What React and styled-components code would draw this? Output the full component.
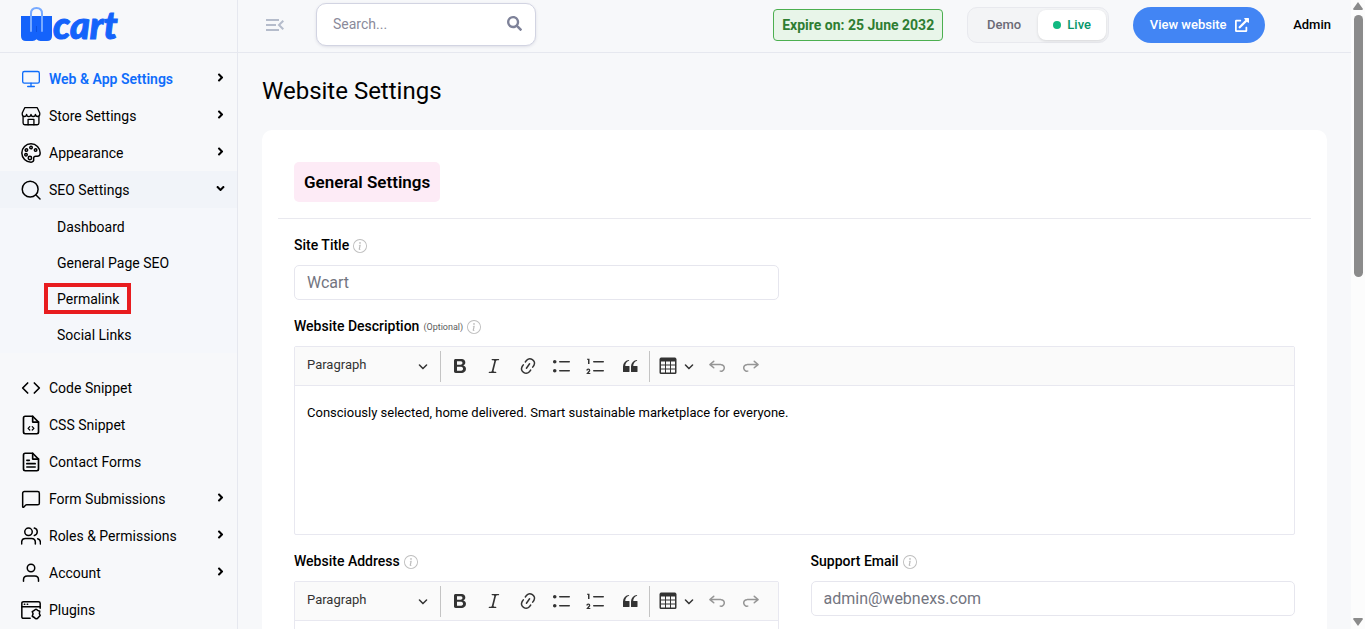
import React from 'react';
import styled, { createGlobalStyle, css } from 'styled-components';

// Icons
import { FaSearch, FaExternalLinkAlt, FaAngleRight, FaAngleDown } from 'react-icons/fa';
import { MdMenuOpen } from 'react-icons/md';
import { BsInfoCircle } from 'react-icons/bs';
import { Monitor, Code, MessageSquare } from 'lucide-react';


const GlobalStyle = createGlobalStyle`
  *, *::before, *::after {
    box-sizing: border-box;
  }

  body {
    margin: 0;
    background: #f7f8fa;
    color: #000;
    font-family: Roboto, "Liberation Sans", sans-serif;
    font-size: 14px;
    line-height: 20px;
  }

  button, input, select, textarea {
    font: inherit;
    color: inherit;
  }

  ul {
    list-style: none;
    margin: 0;
    padding: 0;
  }

  a {
    color: inherit;
    text-decoration: none;
  }
`;

const Shell = styled.div`
  display: flex;
  height: 100vh;
  overflow: hidden;
`;

const Page = styled.div`
  display: flex;
  flex: 1;
  flex-direction: column;
  min-width: 0;
`;

const Sidebar = styled.aside`
  flex: none;
  width: 238px;
  border-right: 1px solid #e6e8ef;
  overflow: hidden;
`;

const Brand = styled.a`
  display: flex;
  align-items: flex-start;
  height: 53px;
  padding: 7px 20px 0;
  border-bottom: 1px solid #e6e8ef;
`;

const BrandName = styled.span`
  color: #1463fb;
  font-family: Lato, "Open Sans", sans-serif;
  font-size: 38px;
  font-style: italic;
  font-weight: 900;
  line-height: 34px;
  -webkit-text-stroke: 1px #1463fb;
`;

const Nav = styled.nav`
  padding-top: 7px;
`;

const NavRow = styled.a`
  display: flex;
  align-items: center;
  gap: 8px;
  height: 37px;
  padding: 0 10px 0 21px;
  background: ${({ $open }) => ($open ? '#f1f4f9' : 'transparent')};
  color: ${({ $active }) => ($active ? '#0f6dfa' : '#000')};
  font-weight: ${({ $active }) => ($active ? 600 : 400)};

  > svg:first-child {
    flex: none;
    width: 20px;
    height: 20px;
  }

  > svg:last-child {
    flex: none;
    width: 13px;
    height: 13px;
    margin-bottom: 2px;
    color: #000;
  }
`;

const NavLabel = styled.span`
  flex: 1;
  white-space: nowrap;
`;

const SubNav = styled.ul`
  margin-bottom: 16px;
  padding: 0 0 1px 44px;
  background: #f5f7fb;
`;

const SubItem = styled.li`
  display: flex;
  align-items: center;
  height: 36px;
`;

const SubLink = styled.a`
  padding: 2px 8px 1px 9px;
  border: 4px solid ${({ $marked }) => ($marked ? '#e81c1f' : 'transparent')};
`;

const Header = styled.header`
  display: flex;
  flex: none;
  align-items: flex-start;
  height: 53px;
  padding: 3px 20px 0 25px;
  border-bottom: 1px solid #e6e8ef;
`;

const IconButton = styled.button`
  display: flex;
  padding: 0;
  border: 0;
  background: none;
  color: ${({ $color }) => $color || 'inherit'};
`;

const MenuToggle = styled(IconButton)`
  margin-top: 10px;
`;

const SearchBox = styled.form`
  display: flex;
  align-items: center;
  width: 220px;
  height: 43px;
  margin-left: 29px;
  padding: 0 13px 2px 16px;
  border: 1px solid #d2d4e2;
  border-radius: 10px;
  background: #fff;
  box-shadow: 0 1px 3px rgba(80, 80, 120, 0.15);
`;

const SearchInput = styled.input`
  flex: 1;
  min-width: 0;
  padding: 0;
  border: 0;
  outline: 0;
  background: none;

  &::placeholder {
    color: #8a8a9a;
    opacity: 1;
  }
`;

const HeaderActions = styled.div`
  display: flex;
  align-items: center;
  height: 43px;
  margin-left: auto;
`;

const ExpireBadge = styled.span`
  padding: 5px 8px;
  border: 1px solid #4caf50;
  border-radius: 4px;
  background: #e8f5e9;
  color: #2e7d32;
  font-weight: 700;
`;

const ModeSwitch = styled.div`
  display: flex;
  height: 36px;
  margin-left: 24px;
  padding: 2px;
  border: 1px solid #e8e9ee;
  border-radius: 10px;
  background: #f3f4f6;
`;

const ModeButton = styled.button`
  display: flex;
  align-items: center;
  justify-content: center;
  gap: 6px;
  width: 68px;
  padding: 0;
  border: 0;
  border-radius: 8px;
  background: none;
  color: #6b6b76;
  font-size: 13px;
  font-weight: 500;

  ${({ $live }) => $live && css`
    background: #fff;
    color: #059669;
    box-shadow: 0 1px 3px rgba(0, 0, 0, 0.12);

    &::before {
      content: '';
      width: 8px;
      height: 8px;
      border-radius: 50%;
      background: #10b981;
    }
  `}
`;

const ViewButton = styled.a`
  display: flex;
  align-items: center;
  justify-content: center;
  gap: 8px;
  width: 132px;
  height: 36px;
  margin-left: 24px;
  border-radius: 18px;
  background: #4285f4;
  color: #fff;
  font-size: 13px;
  font-weight: 500;
`;

const UserName = styled.a`
  margin-left: 28px;
  font-size: 13px;
  font-weight: 500;
`;

const Main = styled.main`
  flex: 1;
  min-height: 0;
  padding: 24px 24px 0;
  overflow: hidden;
`;

const PageTitle = styled.h1`
  margin: 0 0 24px;
  font-size: 24px;
  font-weight: 400;
  line-height: 29px;
`;

const Card = styled.section`
  padding: 32px 16px;
  border-radius: 10px;
  background: #fff;
`;

const CardHead = styled.div`
  padding: 0 16px 16px;
  border-bottom: 1px solid #e9e9ef;
`;

const CardTitle = styled.h2`
  width: fit-content;
  margin: 0;
  padding: 10px;
  border-radius: 5px;
  background: #fdebf6;
  font-size: 17px;
  font-weight: 600;
  line-height: 20px;
`;

const Fields = styled.div`
  display: grid;
  grid-template-columns: 1fr 1fr;
  gap: 16px 32px;
  padding: 16px 16px 0;
`;

const FieldBox = styled.div`
  grid-column: ${({ $wide }) => ($wide ? '1 / -1' : 'auto')};
  min-width: 0;
`;

const FieldHead = styled.div`
  display: flex;
  align-items: center;
  gap: 4px;
  height: 20px;
  margin-bottom: 10px;
`;

const Label = styled.label`
  font-weight: 500;
`;

const Optional = styled.small`
  padding-top: 2px;
  color: #5c5c5c;
  font-size: 9px;
  line-height: 12px;
`;

const Hint = styled(IconButton)`
  padding-top: 1px;
`;

const TextInput = styled.input`
  display: block;
  width: 100%;
  height: 35px;
  padding: 0 12px;
  border: 1px solid #e6e6ee;
  border-radius: 5px;
  outline: 0;
  background: #fff;
  font-size: 16px;

  &::placeholder {
    color: #73757f;
    opacity: 1;
  }
`;

const EditorBox = styled.div`
  border: 1px solid #e8e8f0;
  border-radius: 2px;
  background: #fff;
`;

const Toolbar = styled.div`
  display: flex;
  align-items: center;
  gap: 4px;
  height: 39px;
  padding: 0 4px;
  border-bottom: 1px solid #e8e8f0;
  background: #fafafa;
  color: #333;
`;

const HeadingPicker = styled.div`
  display: grid;
  align-items: center;
  width: 137px;

  > * {
    grid-area: 1 / 1;
  }

  > svg {
    justify-self: end;
    margin-right: 8px;
    pointer-events: none;
  }
`;

const HeadingSelect = styled.select`
  width: 100%;
  height: 30px;
  padding: 0 24px 2px 8px;
  border: 0;
  outline: 0;
  appearance: none;
  background: none;
  font-size: 13px;
`;

const Separator = styled.span`
  width: 1px;
  height: 31px;
  background: #c4c4c4;
`;

const ToolButton = styled.button`
  display: flex;
  flex: none;
  align-items: center;
  justify-content: ${({ $menu }) => ($menu ? 'space-between' : 'center')};
  width: ${({ $menu }) => ($menu ? '44px' : '30px')};
  height: 30px;
  padding: ${({ $menu }) => ($menu ? '0 4px' : '0')};
  border: 0;
  background: none;
  opacity: ${({ disabled }) => (disabled ? 0.5 : 1)};
`;

const EditorText = styled.textarea`
  display: block;
  width: 100%;
  height: 148px;
  padding: 17px 12px;
  border: 0;
  outline: 0;
  resize: none;
  background: none;
  font-size: 13px;
`;

const ScrollRail = styled.div`
  display: flex;
  flex: none;
  flex-direction: column;
  align-items: center;
  width: 14px;
  padding: 2px 0 3px;
  background: #fcfcfc;
  color: #8b8b8b;
`;

const ScrollThumb = styled.div`
  width: 9px;
  height: 42%;
  margin: 5px 0 auto;
  border-radius: 5px;
  background: #8b8b8b;
`;

const LogoMark = () => (
  <svg width="33" height="35" viewBox="0 0 33 35" fill="none" aria-hidden="true">
    <path d="M1 9H32V29Q32 34 27 34H20.500Q18 34 16.500 32.300Q15 34 12.500 34H6Q1 34 1 29Z" fill="#1463fb" />
    <path d="M11 24V6.500Q11 1 16.500 1T22 6.500V24" stroke="#78aaff" strokeWidth="2" strokeLinecap="round" />
    <path d="M16.500 19V25" stroke="#0c50e0" strokeWidth="1" />
  </svg>
);

const Outline = ({ children, width = 1.8 }) => (
  <svg
    viewBox="0 0 24 24"
    fill="none"
    stroke="currentColor"
    strokeWidth={width}
    strokeLinecap="round"
    strokeLinejoin="round"
    aria-hidden="true"
  >
    {children}
  </svg>
);

const StoreIcon = () => (
  <Outline width={1.6}>
    <path d="M4.500 2H19.500L22.500 8.500V10A2.600 2.600 0 0 1 17.300 10A2.650 2.650 0 0 1 12 10A2.650 2.650 0 0 1 6.700 10A2.600 2.600 0 0 1 1.500 10V8.500Z" />
    <path d="M2.500 12.500V20.500Q2.500 22.500 4.500 22.500H19.500Q21.500 22.500 21.500 20.500V12.500" />
    <path d="M8.500 22.500V16H15.500V22.500" />
  </Outline>
);

const PaletteIcon = () => (
  <Outline>
    <path d="M12 1A11 11 0 1 0 12 23C14.500 23 15.500 21.500 15.200 19.500C14.800 17 16 15.500 18.500 15.800C21.500 16.200 23 15 23 12A11 11 0 0 0 12 1Z" />
    <circle cx="12" cy="5.500" r="1.500" />
    <circle cx="17.500" cy="8.500" r="1.500" />
    <circle cx="6.500" cy="8.500" r="1.500" />
    <circle cx="6" cy="14" r="1.500" />
    <circle cx="10.700" cy="18" r="2" />
  </Outline>
);

const SearchIcon = () => (
  <Outline>
    <circle cx="11" cy="11" r="9.500" />
    <path d="M18 18L22.800 22.800" />
  </Outline>
);

const FileBase = ({ children }) => (
  <Outline width={2}>
    <path d="M14 1.500H5Q3 1.500 3 3.500V20.500Q3 22.500 5 22.500H19Q21 22.500 21 20.500V8.500Z" />
    <path d="M14 1.500V8.500H21" />
    {children}
  </Outline>
);

const FileCodeIcon = () => (
  <FileBase>
    <path d="M10.500 14L8.500 16L10.500 18M13.500 14L15.500 16L13.500 18" strokeWidth="1.5" />
  </FileBase>
);

const FileTextIcon = () => (
  <FileBase>
    <path d="M7 10H10M7 14H17M7 18H17" />
  </FileBase>
);

const UsersIcon = () => (
  <Outline width={1.8}>
    <circle cx="9" cy="7" r="4.500" />
    <path d="M0.800 21.500V19.500Q0.800 15 5.500 15H12.500Q17.200 15 17.200 19.500V21.500" />
    <path d="M16 2.500Q19.500 3.500 19.500 7T16 11.500M20 15.200Q23.300 16.200 23.300 19.500V21.500" />
  </Outline>
);

const UserIcon = () => (
  <Outline width={1.8}>
    <circle cx="12" cy="6" r="4.500" />
    <path d="M3 22V20Q3 15.500 7.500 15.500H16.500Q21 15.500 21 20V22" />
  </Outline>
);

const PluginIcon = () => (
  <Outline>
    <path d="M11 22H3Q1 22 1 20V4Q1 2 3 2H21Q23 2 23 4V10" />
    <path d="M1 8H23M4 5H4.500M7.500 5H8" />
    <path d="M16 12.500Q18 9.500 20 12.500L22.500 13.500L22 16.500L23 18.500L20.800 21Q18.500 24 16 21L13.500 19.500L14.500 16.500L13.500 14Z" />
  </Outline>
);

const TOOL_PATHS = {
  Bold: 'M10.187 17H5.773c-.637 0-1.092-.138-1.364-.415-.273-.277-.409-.718-.409-1.323V4.738c0-.617.14-1.062.419-1.332.279-.27.73-.406 1.354-.406h4.68c.69 0 1.288.041 1.793.124.506.083.96.242 1.36.478.341.197.644.447.906.75a3.262 3.262 0 0 1 .808 2.162c0 1.401-.722 2.426-2.167 3.075C15.05 10.175 16 11.315 16 13.01a3.756 3.756 0 0 1-2.296 3.504 6.1 6.1 0 0 1-1.517.377c-.571.073-1.238.11-2 .11zm-.217-6.217H7v4.087h3.069c1.977 0 2.965-.69 2.965-2.072 0-.707-.256-1.22-.768-1.537-.512-.319-1.277-.478-2.296-.478zM7 5.13v3.619h2.606c.729 0 1.292-.067 1.69-.2a1.6 1.6 0 0 0 .91-.765c.165-.267.247-.566.247-.897 0-.707-.26-1.176-.778-1.409-.519-.232-1.31-.348-2.375-.348H7z',
  Italic: 'm9.586 14.633.021.004c-.036.335.095.655.393.962.082.083.173.15.274.201h1.474a.6.6 0 1 1 0 1.2H5.304a.6.6 0 0 1 0-1.2h1.15c.474-.07.809-.182 1.005-.334.157-.122.291-.32.404-.597l2.416-9.55a1.053 1.053 0 0 0-.281-.823 1.12 1.12 0 0 0-.442-.296H8.15a.6.6 0 0 1 0-1.2h6.443a.6.6 0 1 1 0 1.2h-1.195c-.376.056-.65.155-.823.296-.215.175-.423.439-.623.79l-2.366 9.347z',
  Link: 'm11.077 15 .991-1.416a.75.75 0 1 1 1.229.86l-1.148 1.64a.748.748 0 0 1-.217.206 5.251 5.251 0 0 1-8.503-5.955.741.741 0 0 1 .12-.274l1.147-1.639a.75.75 0 1 1 1.228.86L4.933 10.7l.006.003a3.75 3.75 0 0 0 6.132 4.294l.006.004zm5.494-5.335a.748.748 0 0 1-.12.274l-1.147 1.639a.75.75 0 1 1-1.228-.86l.86-1.23a3.75 3.75 0 0 0-6.144-4.301l-.86 1.229a.75.75 0 0 1-1.229-.86l1.148-1.64a.748.748 0 0 1 .217-.206 5.251 5.251 0 0 1 8.503 5.955zm-4.563-2.532a.75.75 0 0 1 .184 1.045l-3.155 4.505a.75.75 0 1 1-1.229-.86l3.155-4.506a.75.75 0 0 1 1.045-.184z',
  'Bulleted List': 'M7 5.75c0 .414.336.75.75.75h9.5a.75.75 0 1 0 0-1.5h-9.5a.75.75 0 0 0-.75.75zm-6 0C1 4.784 1.777 4 2.75 4c.966 0 1.75.777 1.75 1.75 0 .966-.777 1.75-1.75 1.75C1.784 7.5 1 6.723 1 5.75zm6 9c0 .414.336.75.75.75h9.5a.75.75 0 1 0 0-1.5h-9.5a.75.75 0 0 0-.75.75zm-6 0c0-.966.777-1.75 1.75-1.75.966 0 1.75.777 1.75 1.75 0 .966-.777 1.75-1.75 1.75C1.784 16.5 1 15.723 1 14.75z',
  'Numbered List': 'M7 5.75c0 .414.336.75.75.75h9.5a.75.75 0 1 0 0-1.5h-9.5a.75.75 0 0 0-.75.75zM3.5 3v5H2V3.7H1v-1h2.5V3zM.343 17.857l2.59-3.257H2.92a.6.6 0 1 0-1.04 0H.302a2 2 0 1 1 3.995 0h-.001c-.048.405-.16.734-.333.988-.175.254-.59.692-1.244 1.312H4.3v1h-4l.043-.043zM7 14.75a.75.75 0 0 1 .75-.75h9.5a.75.75 0 1 1 0 1.5h-9.5a.75.75 0 0 1-.75-.75z',
  'Block quote': 'M3 10.423a6.5 6.5 0 0 1 6.056-6.408l.038.67C6.448 5.423 5.354 7.663 5.22 10H9c.552 0 .5.432.5.986v4.511c0 .554-.448.503-1 .503h-5c-.552 0-.5-.449-.5-1.003v-4.574zm8 0a6.5 6.5 0 0 1 6.056-6.408l.038.67c-2.646.739-3.74 2.979-3.873 5.315H17c.552 0 .5.432.5.986v4.511c0 .554-.448.503-1 .503h-5c-.552 0-.5-.449-.5-1.003v-4.574z',
  Table: 'M3 5.5v3h4v-3H3Zm0 4v3h4v-3H3Zm0 4v3h4v-3H3Zm5 3h4v-3H8v3Zm5 0h4v-3h-4v3Zm4-4v-3h-4v3h4Zm0-4v-3h-4v3h4Zm1.5 8A1.5 1.5 0 0 1 17 18H3a1.500 1.500 0 0 1-1.500-1.500V3c.222-.863 1.068-1.500 2-1.500h13c.932 0 1.778.637 2 1.500v13.500Zm-6.500-4v-3H8v3h4Zm0-4v-3H8v3h4Z',
  Undo: 'm5.042 9.367 2.189 1.837a.75.75 0 0 1-.965 1.149l-3.788-3.18a.747.747 0 0 1-.21-.284.75.75 0 0 1 .17-.945L6.23 4.762a.75.75 0 1 1 .964 1.15L4.863 7.866h8.917A.75.75 0 0 1 14 7.9a4 4 0 1 1-1.477 7.718l.344-1.489a2.5 2.5 0 1 0 1.094-4.73l.008-.032H5.042z',
  Redo: 'm14.958 9.367-2.189 1.837a.75.75 0 0 0 .965 1.149l3.788-3.18a.747.747 0 0 0 .21-.284.75.75 0 0 0-.17-.945L13.77 4.762a.75.75 0 1 0-.964 1.15l2.331 1.955H6.22A.75.75 0 0 0 6 7.9a4 4 0 1 0 1.477 7.718l-.344-1.489A2.5 2.5 0 1 1 6.039 9.4l-.008-.032h8.927z',
};

const TEXT_TOOLS = ['Bold', 'Italic', 'Link', 'Bulleted List', 'Numbered List', 'Block quote'];

const ToolIcon = ({ name }) => (
  <svg width="20" height="20" viewBox="0 0 20 20" fill="#333" aria-hidden="true">
    <path d={TOOL_PATHS[name]} />
  </svg>
);

const Caret = () => (
  <svg width="10" height="10" viewBox="0 0 10 10" fill="#333" aria-hidden="true">
    <path d="M.941 4.523a.75.75 0 1 1 1.06-1.06l3.006 3.005 3.005-3.005a.75.75 0 1 1 1.06 1.06l-3.549 3.55a.75.75 0 0 1-1.168-.136L.941 4.523z" />
  </svg>
);

const Editor = ({ id, value }) => (
  <EditorBox>
    <Toolbar role="toolbar">
      <HeadingPicker>
        <HeadingSelect aria-label="Heading">
          <option>Paragraph</option>
        </HeadingSelect>
        <Caret />
      </HeadingPicker>
      <Separator />
      {TEXT_TOOLS.map(name => (
        <ToolButton key={name} type="button" aria-label={name}>
          <ToolIcon name={name} />
        </ToolButton>
      ))}
      <Separator />
      <ToolButton type="button" aria-label="Insert table" $menu>
        <ToolIcon name="Table" />
        <Caret />
      </ToolButton>
      <ToolButton type="button" aria-label="Undo" disabled>
        <ToolIcon name="Undo" />
      </ToolButton>
      <ToolButton type="button" aria-label="Redo" disabled>
        <ToolIcon name="Redo" />
      </ToolButton>
    </Toolbar>
    <EditorText id={id} defaultValue={value} />
  </EditorBox>
);

const Field = ({
  id, label, optional, wide, children,
}) => (
  <FieldBox $wide={wide}>
    <FieldHead>
      <Label htmlFor={id}>{label}</Label>
      {optional ? <Optional>(Optional)</Optional> : undefined}
      <Hint type="button" aria-label={`About ${label}`} $color="#bdbdbd">
        <BsInfoCircle size={14} />
      </Hint>
    </FieldHead>
    {children}
  </FieldBox>
);

const MENU = [
  { label: 'Web & App Settings', icon: <Monitor strokeWidth={1.6} />, active: true, expandable: true },
  { label: 'Store Settings', icon: <StoreIcon />, expandable: true },
  { label: 'Appearance', icon: <PaletteIcon />, expandable: true },
  {
    label: 'SEO Settings',
    icon: <SearchIcon />,
    expandable: true,
    children: ['Dashboard', 'General Page SEO', 'Permalink', 'Social Links'],
  },
  { label: 'Code Snippet', icon: <Code /> },
  { label: 'CSS Snippet', icon: <FileCodeIcon /> },
  { label: 'Contact Forms', icon: <FileTextIcon /> },
  { label: 'Form Submissions', icon: <MessageSquare strokeWidth={1.8} />, expandable: true },
  { label: 'Roles & Permissions', icon: <UsersIcon />, expandable: true },
  { label: 'Account', icon: <UserIcon />, expandable: true },
  { label: 'Plugins', icon: <PluginIcon /> },
];

const MenuItem = ({ item }) => (
  <li>
    <NavRow href="#" $active={item.active} $open={!!item.children}>
      {item.icon}
      <NavLabel>{item.label}</NavLabel>
      {item.expandable && (item.children ? <FaAngleDown /> : <FaAngleRight />)}
    </NavRow>
    {item.children && (
      <SubNav>
        {item.children.map(name => (
          <SubItem key={name}>
            <SubLink href="#" $marked={name === 'Permalink'}>{name}</SubLink>
          </SubItem>
        ))}
      </SubNav>
    )}
  </li>
);

const App = () => (
  <Shell>
    <GlobalStyle />
    <Sidebar>
      <Brand href="#" aria-label="Wcart">
        <LogoMark />
        <BrandName>cart</BrandName>
      </Brand>
      <Nav>
        <ul>
          {MENU.map(item => <MenuItem key={item.label} item={item} />)}
        </ul>
      </Nav>
    </Sidebar>
    <Page>
      <Header>
        <MenuToggle type="button" aria-label="Collapse menu" $color="#b5bccb">
          <MdMenuOpen size={24} />
        </MenuToggle>
        <SearchBox>
          <SearchInput type="text" placeholder="Search..." aria-label="Search" />
          <IconButton type="button" aria-label="Submit search" $color="#7e8299">
            <FaSearch size={15} />
          </IconButton>
        </SearchBox>
        <HeaderActions>
          <ExpireBadge>Expire on: 25 June 2032</ExpireBadge>
          <ModeSwitch>
            <ModeButton type="button">Demo</ModeButton>
            <ModeButton type="button" $live>Live</ModeButton>
          </ModeSwitch>
          <ViewButton href="#">
            View website
            <FaExternalLinkAlt size={14} />
          </ViewButton>
          <UserName href="#">Admin</UserName>
        </HeaderActions>
      </Header>
      <Main>
        <PageTitle>Website Settings</PageTitle>
        <Card>
          <CardHead>
            <CardTitle>General Settings</CardTitle>
          </CardHead>
          <Fields>
            <Field id="site-title" label="Site Title">
              <TextInput id="site-title" type="text" placeholder="Wcart" />
            </Field>
            <Field id="site-description" label="Website Description" optional wide>
              <Editor
                id="site-description"
                value="Consciously selected, home delivered. Smart sustainable marketplace for everyone."
              />
            </Field>
            <Field id="site-address" label="Website Address">
              <Editor id="site-address" value="" />
            </Field>
            <Field id="support-email" label="Support Email">
              <TextInput id="support-email" type="email" placeholder="admin@webnexs.com" />
            </Field>
          </Fields>
        </Card>
      </Main>
    </Page>
    <ScrollRail aria-hidden="true">
      <svg width="10" height="8" viewBox="0 0 10 8" fill="currentColor"><path d="M5 0L10 7Q9.500 8 9 8H1Q.5 8 0 7Z" /></svg>
      <ScrollThumb />
      <svg width="10" height="8" viewBox="0 0 10 8" fill="currentColor"><path d="M5 8L10 1Q9.500 0 9 0H1Q.5 0 0 1Z" /></svg>
    </ScrollRail>
  </Shell>
);

export default App;
